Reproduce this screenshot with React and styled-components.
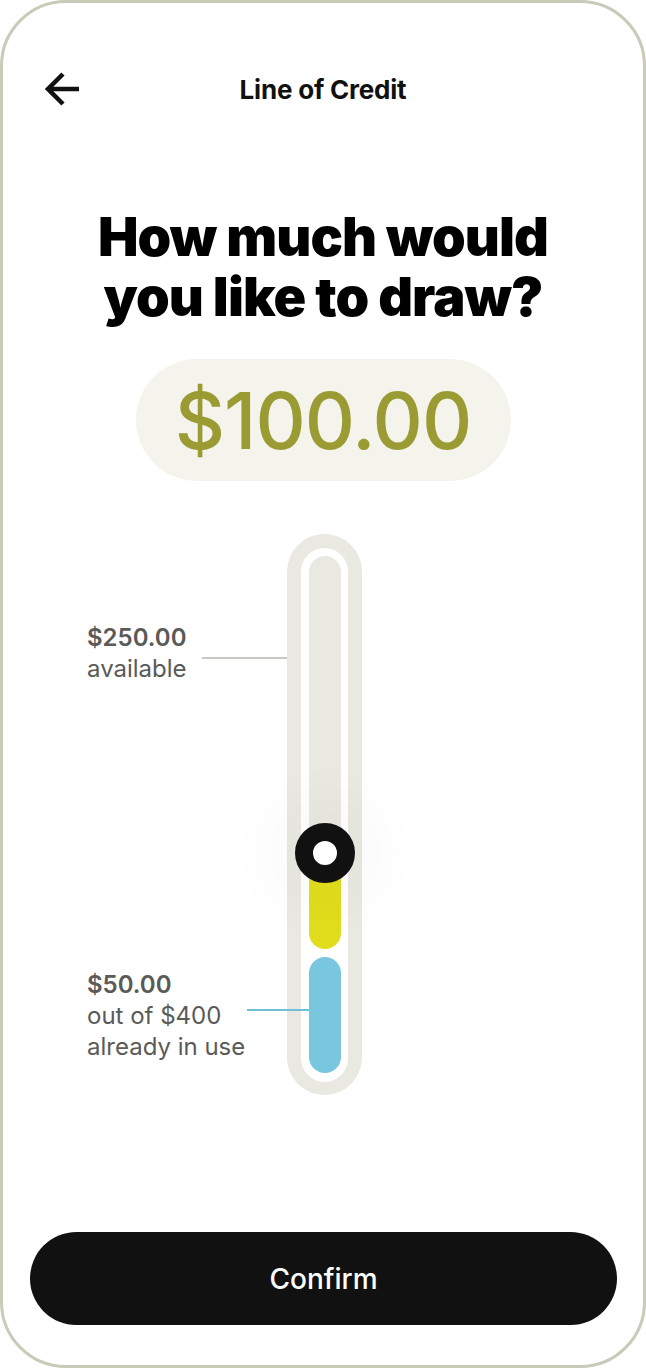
import React from "react";
import styled, { createGlobalStyle } from "styled-components";

const Global = createGlobalStyle`
  html, body {
    margin: 0;
    padding: 0;
    background: #ffffff;
  }
  * {
    box-sizing: border-box;
  }
`;

const Frame = styled.div`
  width: 646px;
  height: 1368px;
  border: 3px solid #c9cab8;
  border-radius: 66px;
  background: #ffffff;
  display: flex;
  flex-direction: column;
  font-family: Inter, "Liberation Sans", sans-serif;
  overflow: hidden;
`;

const Header = styled.div`
  position: relative;
  height: 40px;
  margin-top: 66px;
  display: flex;
  align-items: center;
  justify-content: center;
`;

const BackButton = styled.button`
  position: absolute;
  left: 40px;
  top: 2px;
  width: 40px;
  height: 36px;
  padding: 0;
  border: 0;
  background: none;
  display: flex;
  align-items: center;
  justify-content: center;
`;

const Title = styled.h1`
  margin: 0;
  font-size: 26px;
  font-weight: 700;
  letter-spacing: -0.2px;
  color: #111111;
`;

const Heading = styled.h2`
  margin: 98px 0 0;
  text-align: center;
  font-size: 54px;
  font-weight: 900;
  line-height: 60px;
  letter-spacing: -0.9px;
  color: #000000;
`;

const AmountPill = styled.div`
  align-self: center;
  margin-top: 32px;
  width: 375px;
  height: 122px;
  border-radius: 61px;
  background: #f4f3ec;
  display: flex;
  align-items: center;
  justify-content: center;
  font-size: 78px;
  font-weight: 500;
  letter-spacing: -1px;
  color: #9b9b33;
`;

const SliderRow = styled.div`
  margin-top: 53px;
  display: grid;
  grid-template-columns: 284px 75px 1fr;
`;

const LabelColumn = styled.div`
  display: flex;
  flex-direction: column;
  padding-left: 84px;
`;

const LabelBlock = styled.div`
  display: flex;
  align-items: flex-start;
  margin-top: ${(p) => p.$top}px;
  position: relative;
  z-index: 2;
`;

const LabelText = styled.div`
  font-size: 24px;
  line-height: 31px;
  color: #5a5a58;
  white-space: nowrap;
`;

const Value = styled.div`
  font-weight: 600;
`;

const Leader = styled.div`
  flex: 1;
  height: 1.5px;
  margin-top: ${(p) => p.$y}px;
  margin-left: ${(p) => p.$gap}px;
  margin-right: ${(p) => p.$overlap}px;
  background: ${(p) => p.$color};
`;

const TrackOuter = styled.div`
  width: 75px;
  height: 561px;
  border-radius: 38px;
  background: #e9e8e1;
  padding: 14px 14px 13px;
`;

const TrackInner = styled.div`
  height: 100%;
  border-radius: 24px;
  background: #ffffff;
  padding: 8px 7px 9px 8px;
  display: flex;
  flex-direction: column;
`;

const Bar = styled.div`
  position: relative;
  width: 100%;
  border-radius: 16px;
  background: ${(p) => p.$color};
  flex: ${(p) => (p.$grow ? 1 : "none")};
  height: ${(p) => (p.$h ? `${p.$h}px` : "auto")};
  margin-top: ${(p) => p.$mt || 0}px;
`;

const Knob = styled.div`
  position: absolute;
  left: 50%;
  top: -30px;
  width: 60px;
  height: 60px;
  transform: translateX(-50%);
  border-radius: 50%;
  background: #ffffff;
  border: 18px solid #111111;
  box-shadow: 0 0 50px 36px rgba(0, 0, 0, 0.018);
  z-index: 1;
`;

const Spacer = styled.div`
  flex: 1;
`;

const ConfirmButton = styled.button`
  margin: 0 26px 40px 27px;
  height: 93px;
  border: 0;
  border-radius: 47px;
  background: #111111;
  color: #ffffff;
  font-family: Inter, "Liberation Sans", sans-serif;
  font-size: 28px;
  font-weight: 500;
`;

const ArrowLeft = () => (
  <svg width="36" height="34" viewBox="0 0 36 34" fill="none">
    <path
      d="M34 17H4M18 2L3 17l15 15"
      stroke="#111111"
      strokeWidth="4.5"
      strokeLinecap="butt"
      strokeLinejoin="miter"
    />
  </svg>
);

const App = () => {
  return (
    <>
      <Global />
      <Frame>
        <Header>
          <BackButton aria-label="Back">
            <ArrowLeft />
          </BackButton>
          <Title>Line of Credit</Title>
        </Header>

        <Heading>
          How much would
          <br />
          you like to draw?
        </Heading>

        <AmountPill>$100.00</AmountPill>

        <SliderRow>
          <LabelColumn>
            <LabelBlock $top={88}>
              <LabelText>
                <Value>$250.00</Value>
                available
              </LabelText>
              <Leader $y={35} $gap={15} $overlap={0} $color="#c8c8c3" />
            </LabelBlock>
            <LabelBlock $top={285}>
              <LabelText>
                <Value>$50.00</Value>
                out of $400
                <br />
                already in use
              </LabelText>
              <Leader $y={40} $gap={2} $overlap={-22} $color="#6fbfd6" />
            </LabelBlock>
          </LabelColumn>

          <TrackOuter>
            <TrackInner>
              <Bar $grow $color="#e9e8e1" />
              <Bar $h={96} $color="#e1dd1c">
                <Knob />
              </Bar>
              <Bar $h={116} $mt={8} $color="#79c7df" />
            </TrackInner>
          </TrackOuter>
          <div />
        </SliderRow>

        <Spacer />
        <ConfirmButton>Confirm</ConfirmButton>
      </Frame>
    </>
  );
};

export default App;
